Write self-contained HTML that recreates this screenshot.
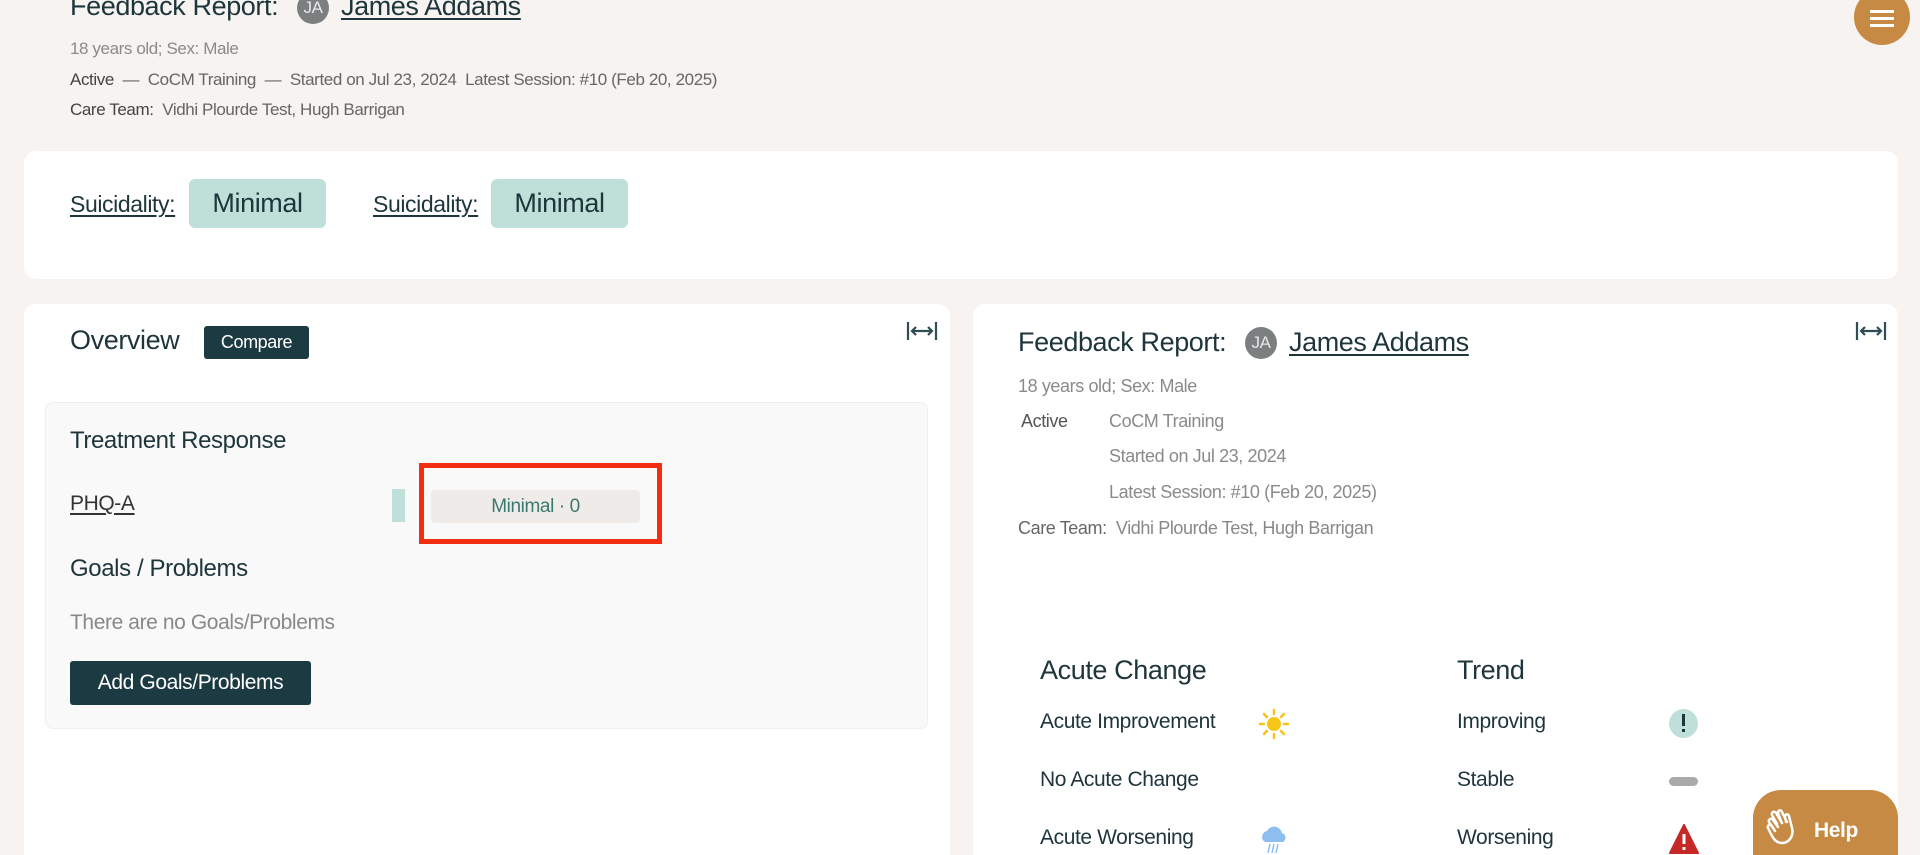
<!DOCTYPE html>
<html style="width:1920px;height:855px;overflow:hidden"><head><meta charset="utf-8"><style>
*{margin:0;padding:0;box-sizing:border-box}
body{width:1920px;height:855px;overflow:hidden;background:#f6f3f0;font-family:"Liberation Sans",sans-serif;color:#1d353b;position:relative;letter-spacing:-0.4px}
.a{position:absolute;white-space:nowrap}
.card{position:absolute;background:#fff;border-radius:12px}
.g{color:#8a8a8a}
u{text-decoration:underline;text-underline-offset:3px}
.av{position:absolute;width:32px;height:32px;border-radius:50%;background:#7b7f80;color:#e8e8e8;font-size:17px;text-align:center;line-height:32px}
.badge{position:absolute;background:#bfe0d8;border-radius:6px;font-size:27px;text-align:center;line-height:49px}
.btn{position:absolute;background:#1c3a42;color:#fff;border-radius:3px;text-align:center}
</style></head><body>
<div class="a" style="left:70px;top:-9px;font-size:27px">Feedback Report:</div>
<div class="av" style="left:297px;top:-8px">JA</div>
<div class="a" style="left:341px;top:-9px;font-size:27px"><u>James Addams</u></div>
<div class="a g" style="left:70px;top:39px;font-size:17px">18 years old; Sex: Male</div>
<div class="a" style="left:70px;top:70px;font-size:17px;color:#666"><span style="color:#444">Active</span> &nbsp;— &nbsp;CoCM Training &nbsp;— &nbsp;Started on Jul 23, 2024 &nbsp;Latest Session: #10 (Feb 20, 2025)</div>
<div class="a" style="left:70px;top:100px;font-size:17px;color:#666"><span style="color:#444">Care Team:</span> &nbsp;Vidhi Plourde Test, Hugh Barrigan</div>
<div class="a" style="left:1854px;top:-11px;width:56px;height:56px;border-radius:50%;background:#c68a45"></div>
<div class="a" style="left:1870px;top:10px;width:24px;height:3px;background:#fff;box-shadow:0 7px 0 #fff,0 14px 0 #fff"></div>

<div class="card" style="left:24px;top:151px;width:1874px;height:128px"></div>
<div class="a" style="left:70px;top:191px;font-size:23px"><u>Suicidality:</u></div>
<div class="badge" style="left:189px;top:179px;width:137px">Minimal</div>
<div class="a" style="left:373px;top:191px;font-size:23px"><u>Suicidality:</u></div>
<div class="badge" style="left:491px;top:179px;width:137px">Minimal</div>

<div class="card" style="left:24px;top:304px;width:926px;height:551px;border-radius:12px 12px 0 0"></div>
<div class="a" style="left:70px;top:325px;font-size:27px">Overview</div>
<div class="btn" style="left:204px;top:326px;width:105px;height:33px;font-size:18px;line-height:33px">Compare</div>
<svg class="a" style="left:906px;top:319px" width="32" height="24" viewBox="0 0 32 24" fill="none" stroke="#2e4d55" stroke-width="2.2"><path d="M2 3v18M30 3v18M6 12h20M10 8l-4 4 4 4M22 8l4 4-4 4"/></svg>
<div class="a" style="left:45px;top:402px;width:883px;height:327px;background:#f9f9f9;border-radius:8px;border:1px solid #f1efed"></div>
<div class="a" style="left:70px;top:427px;font-size:24px">Treatment Response</div>
<div class="a" style="left:70px;top:492px;font-size:21px;color:#333"><u>PHQ-A</u></div>
<div class="a" style="left:392px;top:489px;width:13px;height:33px;background:#bfe0d8"></div>
<div class="a" style="left:431px;top:490px;width:209px;height:33px;background:#efebe8;border-radius:4px;color:#3a7a6e;font-size:19px;text-align:center;line-height:33px">Minimal · 0</div>
<div class="a" style="left:419px;top:463px;width:243px;height:81px;border:5px solid #f22d10"></div>
<div class="a" style="left:70px;top:555px;font-size:24px">Goals / Problems</div>
<div class="a" style="left:70px;top:611px;font-size:21px;color:#888">There are no Goals/Problems</div>
<div class="btn" style="left:70px;top:661px;width:241px;height:44px;font-size:21px;line-height:44px">Add Goals/Problems</div>

<div class="card" style="left:973px;top:304px;width:925px;height:551px;border-radius:12px 12px 0 0"></div>
<svg class="a" style="left:1855px;top:319px" width="32" height="24" viewBox="0 0 32 24" fill="none" stroke="#2e4d55" stroke-width="2.2"><path d="M2 3v18M30 3v18M6 12h20M10 8l-4 4 4 4M22 8l4 4-4 4"/></svg>
<div class="a" style="left:1018px;top:327px;font-size:27px">Feedback Report:</div>
<div class="av" style="left:1245px;top:327px">JA</div>
<div class="a" style="left:1289px;top:327px;font-size:27px"><u>James Addams</u></div>
<div class="a g" style="left:1018px;top:376px;font-size:18px">18 years old; Sex: Male</div>
<div class="a" style="left:1021px;top:411px;font-size:18px;color:#555">Active</div>
<div class="a g" style="left:1109px;top:411px;font-size:18px">CoCM Training</div>
<div class="a g" style="left:1109px;top:446px;font-size:18px">Started on Jul 23, 2024</div>
<div class="a g" style="left:1109px;top:482px;font-size:18px">Latest Session: #10 (Feb 20, 2025)</div>
<div class="a" style="left:1018px;top:518px;font-size:18px;color:#888"><span style="color:#666">Care Team:</span> &nbsp;Vidhi Plourde Test, Hugh Barrigan</div>

<div class="a" style="left:1040px;top:655px;font-size:27px">Acute Change</div>
<div class="a" style="left:1457px;top:655px;font-size:27px">Trend</div>
<div class="a" style="left:1040px;top:710px;font-size:21px">Acute Improvement</div>
<div class="a" style="left:1040px;top:768px;font-size:21px">No Acute Change</div>
<div class="a" style="left:1040px;top:826px;font-size:21px">Acute Worsening</div>
<div class="a" style="left:1457px;top:710px;font-size:21px">Improving</div>
<div class="a" style="left:1457px;top:768px;font-size:21px">Stable</div>
<div class="a" style="left:1457px;top:826px;font-size:21px">Worsening</div>
<svg class="a" style="left:1258px;top:708px" width="32" height="32" viewBox="0 0 32 32"><circle cx="16" cy="16" r="7" fill="#f5c518"/><g stroke="#f5c518" stroke-width="2.5" stroke-linecap="round"><path d="M16 2v4M16 26v4M2 16h4M26 16h4M6 6l3 3M23 23l3 3M6 26l3-3M23 9l3-3"/></g></svg>
<svg class="a" style="left:1258px;top:822px" width="32" height="33" viewBox="0 0 32 33"><path d="M7 20a6 6 0 0 1 2-11 8 8 0 0 1 15 2 5 5 0 0 1 1 9z" fill="#8cbef0"/><g stroke="#8cbef0" stroke-width="1.5"><path d="M12 22l-2 9M16 22l-2 9M20 22l-2 9"/></g></svg>
<div class="a" style="left:1669px;top:709px;width:29px;height:29px;border-radius:50%;background:#bfe0d8"></div>
<div class="a" style="left:1682px;top:714px;width:3px;height:12px;background:#1d353b"></div>
<div class="a" style="left:1682px;top:729px;width:3px;height:3px;background:#1d353b"></div>
<div class="a" style="left:1669px;top:777px;width:29px;height:9px;border-radius:5px;background:#aaa"></div>
<svg class="a" style="left:1669px;top:824px" width="30" height="30" viewBox="0 0 30 30"><path d="M15 1L29 29H1z" fill="#c62828" stroke="#c62828" stroke-linejoin="round" stroke-width="2"/><path d="M15 10v10M15 23v3" stroke="#fff" stroke-width="3"/></svg>
<div class="a" style="left:1753px;top:790px;width:145px;height:65px;border-radius:28px 28px 0 0;background:#c68a45"></div>
<svg class="a" style="left:1763px;top:808px" width="42" height="42" viewBox="0 0 42 42" fill="none" stroke="#fff" stroke-width="2.5" stroke-linecap="round" stroke-linejoin="round"><path d="M10 20l-4-6a2 2 0 0 1 4-2l5 7M14 16l-5-9a2 2 0 0 1 4-2l6 10M18 13l-3-8a2 2 0 0 1 4-1l5 10M23 14l-1-5a2 2 0 0 1 4-1l3 12c2 8-3 15-10 15-5 0-8-3-11-9l-3-6a2 2 0 0 1 4-2l3 5"/></svg>
<div class="a" style="left:1814px;top:819px;font-size:21px;color:#fff;font-weight:bold">Help</div>
</body></html>
